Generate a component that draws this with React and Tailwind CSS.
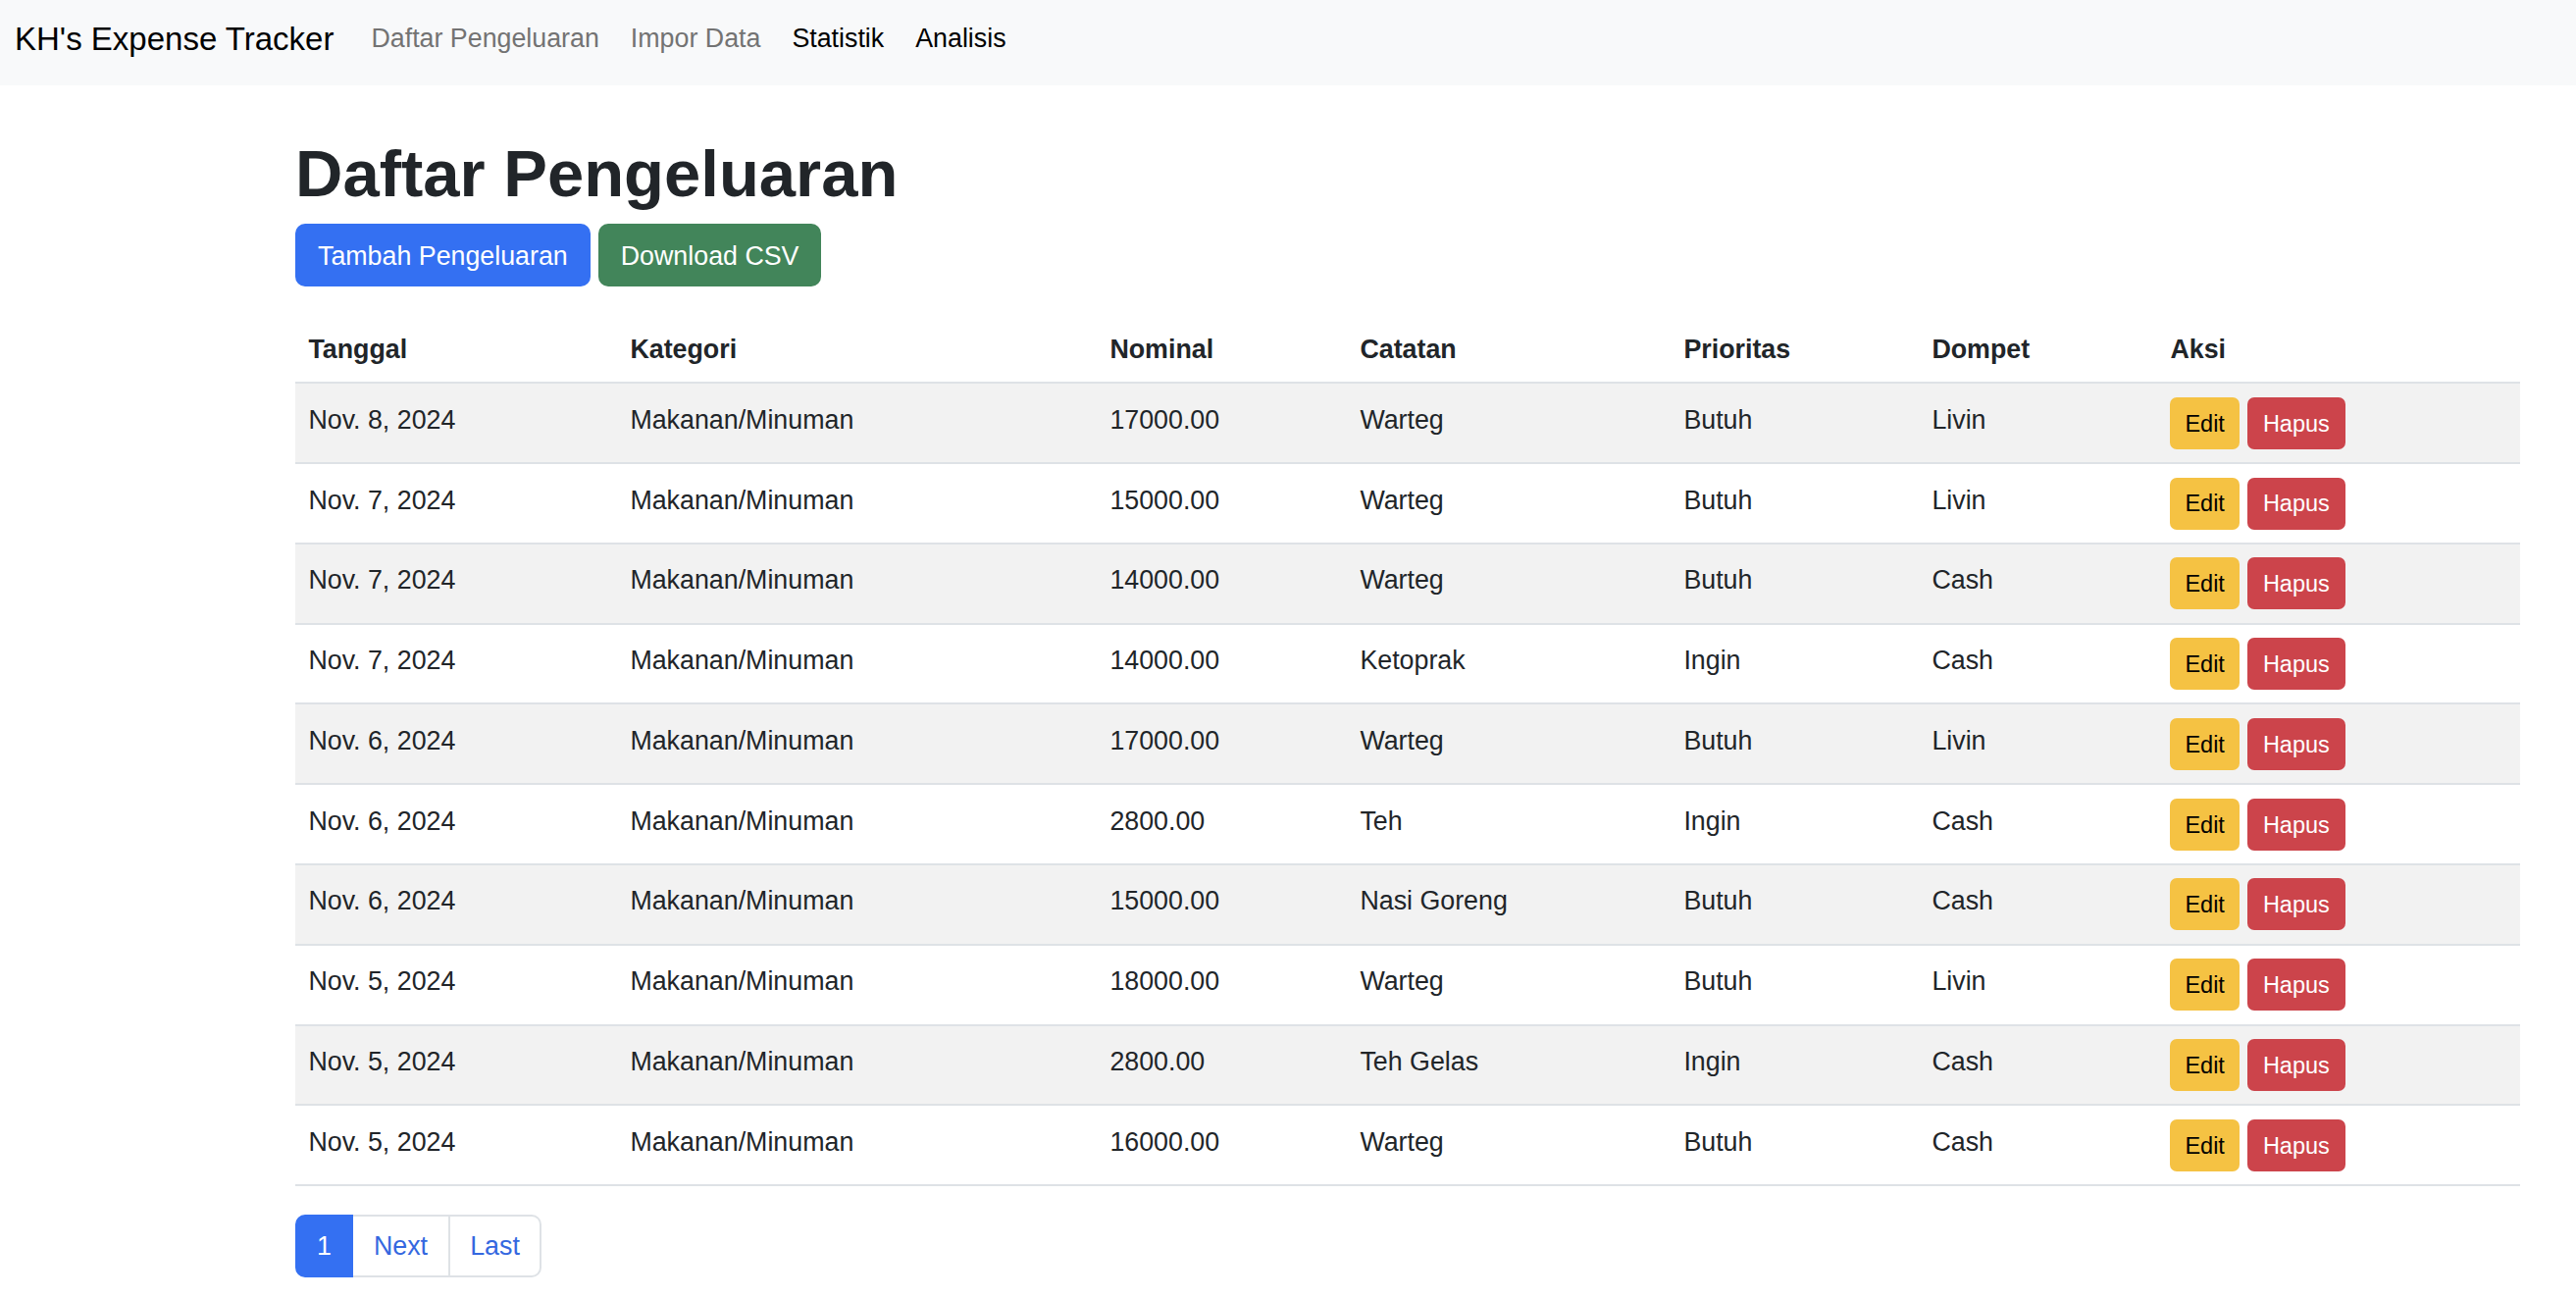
import React from 'react';

const rows = [
  { tanggal: 'Nov. 8, 2024', kategori: 'Makanan/Minuman', nominal: '17000.00', catatan: 'Warteg', prioritas: 'Butuh', dompet: 'Livin' },
  { tanggal: 'Nov. 7, 2024', kategori: 'Makanan/Minuman', nominal: '15000.00', catatan: 'Warteg', prioritas: 'Butuh', dompet: 'Livin' },
  { tanggal: 'Nov. 7, 2024', kategori: 'Makanan/Minuman', nominal: '14000.00', catatan: 'Warteg', prioritas: 'Butuh', dompet: 'Cash' },
  { tanggal: 'Nov. 7, 2024', kategori: 'Makanan/Minuman', nominal: '14000.00', catatan: 'Ketoprak', prioritas: 'Ingin', dompet: 'Cash' },
  { tanggal: 'Nov. 6, 2024', kategori: 'Makanan/Minuman', nominal: '17000.00', catatan: 'Warteg', prioritas: 'Butuh', dompet: 'Livin' },
  { tanggal: 'Nov. 6, 2024', kategori: 'Makanan/Minuman', nominal: '2800.00', catatan: 'Teh', prioritas: 'Ingin', dompet: 'Cash' },
  { tanggal: 'Nov. 6, 2024', kategori: 'Makanan/Minuman', nominal: '15000.00', catatan: 'Nasi Goreng', prioritas: 'Butuh', dompet: 'Cash' },
  { tanggal: 'Nov. 5, 2024', kategori: 'Makanan/Minuman', nominal: '18000.00', catatan: 'Warteg', prioritas: 'Butuh', dompet: 'Livin' },
  { tanggal: 'Nov. 5, 2024', kategori: 'Makanan/Minuman', nominal: '2800.00', catatan: 'Teh Gelas', prioritas: 'Ingin', dompet: 'Cash' },
  { tanggal: 'Nov. 5, 2024', kategori: 'Makanan/Minuman', nominal: '16000.00', catatan: 'Warteg', prioritas: 'Butuh', dompet: 'Cash' },
];

const headers = ['Tanggal', 'Kategori', 'Nominal', 'Catatan', 'Prioritas', 'Dompet', 'Aksi'];

// cell padding is bootstrap's 8px scaled up for the 1.675 zoom
const cell = 'px-[13.4px] py-[13.4px] align-top border-b-2 border-[#dee2e6] text-left';
// text cells sit a touch lower than the button cell
const textCell = 'px-[13.4px] pt-[16.4px] pb-[10.4px] align-top border-b-2 border-[#dee2e6] text-left';

const App = () => {
  return (
    <div className="min-h-screen bg-white text-[#212529] font-['Liberation_Sans',Arial,sans-serif] text-[26.8px] leading-[1.5]">
      {/* navbar */}
      <nav className="h-[87px] bg-[#f8f9fa] flex items-center pl-[15px] pb-[8px]">
        <span className="text-[33px] text-black mr-[22px]">KH's Expense Tracker</span>
        <a className="px-[16px] text-[#737373]">Daftar Pengeluaran</a>
        <a className="px-[16px] text-[#737373]">Impor Data</a>
        <a className="px-[16px] text-black">Statistik</a>
        <a className="px-[16px] text-black">Analisis</a>
      </nav>

      <div className="ml-[301px] w-[2268px]">
        <h1 className="mt-[50px] mb-[11px] text-[67px] leading-[1.2] font-bold">Daftar Pengeluaran</h1>

        <div className="flex gap-[8px]">
          <button className="h-[64px] px-[23px] pt-[2px] rounded-[10px] bg-[#3470f2] text-white">Tambah Pengeluaran</button>
          <button className="h-[64px] px-[23px] pt-[2px] rounded-[10px] bg-[#42855a] text-white">Download CSV</button>
        </div>

        <table className="mt-[30px] w-full table-fixed border-collapse">
          <colgroup>
            <col className="w-[328px]" />
            <col className="w-[489px]" />
            <col className="w-[255px]" />
            <col className="w-[330px]" />
            <col className="w-[253px]" />
            <col className="w-[243px]" />
            <col className="w-[370px]" />
          </colgroup>
          <thead>
            <tr>
              {headers.map((h) => (
                <th key={h} className={cell + ' font-bold'}>{h}</th>
              ))}
            </tr>
          </thead>
          <tbody>
            {rows.map((r, i) => (
              <tr key={i} className={i % 2 === 0 ? 'bg-[#f2f2f2]' : 'bg-white'}>
                <td className={textCell}>{r.tanggal}</td>
                <td className={textCell}>{r.kategori}</td>
                <td className={textCell}>{r.nominal}</td>
                <td className={textCell}>{r.catatan}</td>
                <td className={textCell}>{r.prioritas}</td>
                <td className={textCell}>{r.dompet}</td>
                <td className={cell}>
                  <div className="flex gap-[8px]">
                    <button className="h-[53px] px-[15px] pt-[2px] rounded-[7px] bg-[#f5c243] text-black text-[23.5px]">Edit</button>
                    <button className="h-[53px] px-[16px] pt-[2px] rounded-[7px] bg-[#cc444b] text-white text-[23.5px]">Hapus</button>
                  </div>
                </td>
              </tr>
            ))}
          </tbody>
        </table>

        {/* pagination */}
        <div className="mt-[29px] flex">
          <span className="h-[64px] w-[59px] flex items-center justify-center rounded-l-[10px] bg-[#3470f2] text-white border-2 border-[#3470f2]">1</span>
          <span className="h-[64px] w-[99px] flex items-center justify-center border-2 border-l-0 border-[#dee2e6] text-[#3468e0]">Next</span>
          <span className="h-[64px] w-[93px] flex items-center justify-center rounded-r-[10px] border-2 border-l-0 border-[#dee2e6] text-[#3468e0]">Last</span>
        </div>
      </div>
    </div>
  );
};

export default App;
